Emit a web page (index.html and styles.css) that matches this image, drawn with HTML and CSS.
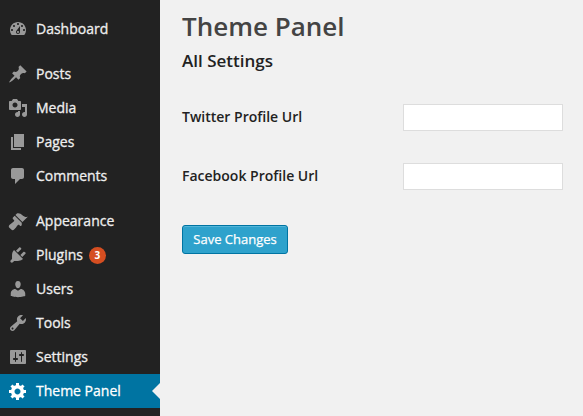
FILE: index.html
```html
<!DOCTYPE html>
<html lang="en">
<head>
<meta charset="utf-8">
<title>Theme Panel</title>
<link rel="stylesheet" href="styles.css">
</head>
<body>
<div class="layout">
  <nav class="sidebar">
    <ul class="menu">
      <li class="item"><svg class="icon" viewBox="0 0 20 20"><path d="M3.76 16h12.48c1.1-1.37 1.76-3.11 1.76-5 0-4.42-3.58-8-8-8s-8 3.58-8 8c0 1.89.66 3.63 1.76 5zM10 4c.55 0 1 .45 1 1s-.45 1-1 1-1-.45-1-1 .45-1 1-1zM6 6c.55 0 1 .45 1 1s-.45 1-1 1-1-.45-1-1 .45-1 1-1zm8 0c.55 0 1 .45 1 1s-.45 1-1 1-1-.45-1-1 .45-1 1-1zm-5.37 5.55L12 7v6c0 1.1-.9 2-2 2s-2-.9-2-2c0-.57.24-1.08.63-1.45zM4 10c.55 0 1 .45 1 1s-.45 1-1 1-1-.45-1-1 .45-1 1-1zm12 0c.55 0 1 .45 1 1s-.45 1-1 1-1-.45-1-1 .45-1 1-1zm-5 3c0-.55-.45-1-1-1s-1 .45-1 1 .45 1 1 1 1-.45 1-1z"/></svg>Dashboard</li>
      <li class="item group-start"><svg class="icon" viewBox="0 0 20 20"><path d="M10.44 3.02l1.82-1.82 6.36 6.35-1.83 1.82c-1.05-.68-2.48-.57-3.41.36l-.75.75c-.92.93-1.04 2.35-.35 3.41l-1.83 1.82-2.41-2.41-2.8 2.79c-.42.42-3.38 2.71-3.8 2.29s1.86-3.39 2.28-3.81l2.79-2.79L4.1 9.36l1.83-1.82c1.05.69 2.48.57 3.4-.36l.75-.75c.93-.92 1.05-2.35.36-3.41z"/></svg>Posts</li>
      <li class="item"><svg class="icon" viewBox="0 0 20 20"><path d="M13 11V4c0-.55-.45-1-1-1h-1.67L9 1H5L3.67 3H2c-.55 0-1 .45-1 1v7c0 .55.45 1 1 1h10c.55 0 1-.45 1-1zM7 4.5c1.38 0 2.5 1.12 2.5 2.5S8.38 9.5 7 9.5 4.5 8.38 4.5 7 5.62 4.5 7 4.5zM14 6h5v10.5c0 1.38-1.12 2.5-2.5 2.5S14 17.88 14 16.5s1.12-2.5 2.5-2.5c.17 0 .34.02.5.05V9h-3V6zm-4 8.05V13h2v3.5c0 1.38-1.12 2.5-2.5 2.5S7 17.88 7 16.5 8.12 14 9.5 14c.17 0 .34.02.5.05z"/></svg>Media</li>
      <li class="item"><svg class="icon" viewBox="0 0 20 20"><path d="M6 15V2h10v13H6zm-1 1h8v2H3V5h2v11z"/></svg>Pages</li>
      <li class="item"><svg class="icon" viewBox="0 0 20 20"><path d="M5 2h9c1.1 0 2 .9 2 2v7c0 1.1-.9 2-2 2h-2l-5 5v-5H5c-1.1 0-2-.9-2-2V4c0-1.1.9-2 2-2z"/></svg>Comments</li>
      <li class="item group-start"><svg class="icon" viewBox="0 0 20 20"><path d="M14.48 11.06L7.41 3.99l1.5-1.5c.5-.56 2.3-.47 3.51.32 1.21.8 1.43 1.28 2.91 2.1 1.18.64 2.45 1.26 4.45.85l-5.3 5.3zm-.71.71L6.7 4.7 4.93 6.47c-.39.39-.39 1.02 0 1.41l1.06 1.06c.39.39.39 1.03 0 1.42-.6.6-1.6 1.2-2.4 1.9L1.4 13.9c-.8.8-.8 2 0 2.8l1.9 1.9c.8.8 2 .8 2.8 0l1.9-2.2c.7-.8 1.3-1.8 1.9-2.4.39-.39 1.03-.39 1.42 0l.63.63c.39.39 1.02.39 1.41 0l.41-.85z"/></svg>Appearance</li>
      <li class="item"><svg class="icon" viewBox="0 0 20 20"><path d="M13.11 4.36L9.87 7.6 8 5.73l3.24-3.24c.35-.34 1.05-.2 1.56.32.52.51.66 1.21.31 1.55zm-8 1.77l.91-1.12 9.01 9.01-1.19.84c-.71.71-2.63 1.16-3.82 1.16H6.14L4.9 17.26c-.59.59-1.54.59-2.12 0-.59-.58-.59-1.53 0-2.12l1.24-1.24v-3.88c0-1.13.4-3.19 1.09-3.89zm7.26 3.97l3.24-3.24c.34-.35 1.04-.21 1.55.31.52.51.66 1.21.31 1.55l-3.24 3.25z"/></svg>Plugins<span class="badge">3</span></li>
      <li class="item"><svg class="icon" viewBox="0 0 20 20"><path d="M10 9.25c-2.27 0-2.73-3.44-2.73-3.44C7 4.02 7.82 2 9.97 2c2.16 0 2.98 2.02 2.71 3.81 0 0-.41 3.44-2.68 3.44zm0 2.57L12.72 10c2.39 0 4.52 2.33 4.52 4.53v2.49s-3.65 1.13-7.24 1.13c-3.65 0-7.24-1.13-7.24-1.13v-2.49c0-2.25 1.94-4.48 4.47-4.48z"/></svg>Users</li>
      <li class="item"><svg class="icon" viewBox="0 0 20 20"><path d="M16.68 9.77c-1.34 1.34-3.3 1.67-4.95.99l-5.41 6.52c-.99.99-2.59.99-3.58 0s-.99-2.59 0-3.57l6.52-5.42c-.68-1.65-.35-3.61.99-4.95 1.28-1.28 3.12-1.62 4.72-1.06l-2.89 2.89 2.82 2.82 2.86-2.87c.53 1.58.18 3.39-1.08 4.65zM3.81 16.21c.4.39 1.04.39 1.43 0 .4-.4.4-1.04 0-1.43-.39-.4-1.03-.4-1.43 0-.39.39-.39 1.03 0 1.43z"/></svg>Tools</li>
      <li class="item"><svg class="icon" viewBox="0 0 20 20"><path d="M18 16V4c0-.55-.45-1-1-1H3c-.55 0-1 .45-1 1v12c0 .55.45 1 1 1h14c.55 0 1-.45 1-1zM8 11h1c.55 0 1 .45 1 1s-.45 1-1 1H8v1.5c0 .28-.22.5-.5.5s-.5-.22-.5-.5V13H6c-.55 0-1-.45-1-1s.45-1 1-1h1V5.5c0-.28.22-.5.5-.5s.5.22.5.5V11zm5-2h-1c-.55 0-1-.45-1-1s.45-1 1-1h1V5.5c0-.28.22-.5.5-.5s.5.22.5.5V7h1c.55 0 1 .45 1 1s-.45 1-1 1h-1v5.5c0 .28-.22.5-.5.5s-.5-.22-.5-.5V9z"/></svg>Settings</li>
      <li class="item active"><svg class="icon" viewBox="0 0 20 20"><path d="M18 12h-2.18c-.17.7-.44 1.35-.81 1.93l1.54 1.54-2.1 2.1-1.54-1.54c-.58.36-1.23.63-1.91.79V19H8v-2.18c-.68-.16-1.33-.43-1.91-.79l-1.54 1.54-2.12-2.12 1.54-1.54c-.36-.58-.63-1.23-.79-1.91H1V9.03h2.17c.16-.7.44-1.35.8-1.94L2.43 5.55l2.1-2.1 1.54 1.54c.58-.37 1.24-.64 1.93-.81V2h3v2.18c.68.16 1.33.43 1.91.79l1.54-1.54 2.12 2.12-1.54 1.54c.36.59.64 1.24.8 1.94H18V12zm-8.5 1.5c1.66 0 3-1.34 3-3s-1.34-3-3-3-3 1.34-3 3 1.34 3 3 3z"/></svg>Theme Panel</li>
    </ul>
  </nav>
  <main class="content">
    <h1 class="title">Theme Panel</h1>
    <h2 class="subtitle">All Settings</h2>
    <form class="form">
      <div class="row">
        <label class="label" for="tw">Twitter Profile Url</label>
        <input class="field" id="tw" type="text">
      </div>
      <div class="row">
        <label class="label" for="fb">Facebook Profile Url</label>
        <input class="field" id="fb" type="text">
      </div>
      <button class="save" type="button">Save Changes</button>
    </form>
  </main>
</div>
</body>
</html>
```

FILE: styles.css
```css
* { box-sizing: border-box; }
html, body { margin: 0; height: 100%; overflow: hidden; }
body { background: #f1f1f1; font-family: "Open Sans", sans-serif; color: #222; }
.layout { display: flex; height: 416px; }
.sidebar { width: 160px; flex: none; background: #222; padding-top: 12px; }
.menu { list-style: none; margin: 0; padding: 0; }
.item { position: relative; display: flex; align-items: center; height: 34px; padding-left: 8px; padding-bottom: 2px; font-size: 14px; font-weight: 500; color: #eee; -webkit-text-stroke: .3px #eee; }
.group-start { margin-top: 11px; }
.icon { width: 20px; height: 20px; margin-top: 2px; margin-right: 8px; fill: #999; flex: none; }
.active { background: #0074a2; color: #fff; -webkit-text-stroke: .3px #fff; }
.active .icon { fill: #fff; }
.active::after { content: ""; position: absolute; right: 0; top: 50%; margin-top: -8px; border: 8px solid transparent; border-left-width: 0; border-right-color: #f1f1f1; }
.badge { display: flex; align-items: center; justify-content: center; width: 17px; height: 17px; margin-left: 6px; margin-top: 2px; border-radius: 50%; background: #d54e21; color: #fff; font-size: 10px; font-weight: 700; -webkit-text-stroke: 0; }
.content { flex: 1; padding: 9px 20px 0 22px; }
.title { margin: 0; font-size: 26px; line-height: 34px; font-weight: 600; color: #444; }
.subtitle { margin: 7px 0 0; font-size: 17px; line-height: 22px; font-weight: 600; color: #222; }
.form { display: flex; flex-direction: column; align-items: stretch; margin-top: 32px; }
.row { display: flex; align-items: center; justify-content: space-between; height: 27px; margin-bottom: 32px; }
.label { padding-bottom: 2px; font-size: 14px; font-weight: 600; color: #222; }
.field { width: 160px; height: 27px; background: #fff; border: 1px solid #ddd; padding: 0; }
.save { align-self: flex-start; width: 106px; height: 29px; margin-top: 3px; padding: 0 0 2px; background: #2ea2cc; border: 1px solid #0074a2; border-radius: 3px; box-shadow: inset 0 1px 0 rgba(120, 200, 230, .5); color: #fff; font-family: "Open Sans", sans-serif; font-size: 13px; font-weight: 500; -webkit-text-stroke: .25px #fff; }
```
